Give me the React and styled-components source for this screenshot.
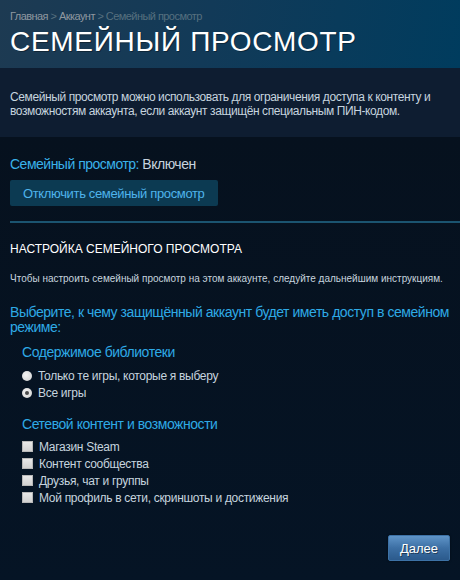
import React, { useState } from "react";
import styled, { createGlobalStyle } from "styled-components";

const GlobalStyle = createGlobalStyle`
  html, body {
    margin: 0;
    padding: 0;
    background: #051120;
  }
  body {
    font-family: "Liberation Sans", Arial, sans-serif;
  }
`;

const Page = styled.div`
  width: 460px;
  height: 580px;
  overflow: hidden;
  background: #051120;
  display: flex;
  flex-direction: column;
`;

const Header = styled.div`
  height: 68px;
  box-sizing: border-box;
  padding: 9px 10px 0;
  background: linear-gradient(100deg, #1d3a52 0%, #123a58 45%, #003c5e 100%);
`;

const Crumbs = styled.div`
  font-size: 11px;
  line-height: 14px;
  letter-spacing: -0.55px;
  color: #56707f;
  a {
    color: #8f98a0;
    text-decoration: none;
  }
`;

const Title = styled.h1`
  margin: 3px 0 0;
  font-size: 28px;
  line-height: 32px;
  font-weight: normal;
  color: #ffffff;
  letter-spacing: 0.7px;
  text-shadow: 1px 1px 0 rgba(0, 0, 0, 0.35);
`;

const Intro = styled.div`
  height: 69px;
  box-sizing: border-box;
  padding: 22px 10px 0;
  background: #0e1d31;
  font-size: 12px;
  line-height: 14px;
  letter-spacing: -0.4px;
  color: #c6d4df;
`;

const Content = styled.div`
  flex: 1;
  display: flex;
  flex-direction: column;
  padding: 18px 0 19px 10px;
  background: linear-gradient(to bottom, #06111e, #051425);
`;

const Status = styled.div`
  font-size: 14px;
  line-height: 18px;
  letter-spacing: -0.5px;
  color: #c6d4df;
  span {
    color: #3ab2ea;
  }
`;

const DisableButton = styled.button`
  align-self: flex-start;
  margin-top: 7px;
  height: 26px;
  padding: 0 13px;
  border: none;
  border-radius: 2px;
  background: #0c3a52;
  color: #4fb4ec;
  font-family: inherit;
  font-size: 13px;
  letter-spacing: -0.35px;
  cursor: pointer;
`;

const Divider = styled.div`
  height: 2px;
  margin-top: 15px;
  background: #1b5470;
`;

const SectionTitle = styled.h2`
  margin: 19px 0 0;
  font-size: 12px;
  line-height: 14px;
  font-weight: normal;
  color: #ffffff;
  text-transform: uppercase;
`;

const Note = styled.p`
  margin: 17px 0 0;
  font-size: 10px;
  line-height: 12px;
  color: #c6d4df;
`;

const Question = styled.p`
  margin: 20px 0 0;
  font-size: 14px;
  line-height: 15px;
  letter-spacing: -0.45px;
  color: #2eaae6;
`;

const Group = styled.div`
  margin: ${(p) => p.$top}px 0 0 12px;
  display: flex;
  flex-direction: column;
`;

const GroupTitle = styled.div`
  font-size: 14px;
  line-height: 17px;
  letter-spacing: -0.45px;
  color: #2eaae6;
  margin-bottom: ${(p) => p.$gap}px;
`;

const Option = styled.label`
  display: flex;
  align-items: center;
  gap: 6px;
  height: 17px;
  font-size: 12px;
  letter-spacing: -0.3px;
  color: #c6d4df;
  cursor: pointer;
`;

const Radio = styled.span`
  width: 10px;
  height: 10px;
  border-radius: 50%;
  background: radial-gradient(circle at 40% 40%, #f4f4f4 0%, #cfcfcf 100%);
  display: flex;
  align-items: center;
  justify-content: center;
  &::after {
    content: "";
    width: 4px;
    height: 4px;
    border-radius: 50%;
    background: ${(p) => (p.$on ? "#4a4a4a" : "transparent")};
  }
`;

const Check = styled.span`
  width: 11px;
  height: 11px;
  box-sizing: border-box;
  border: 1px solid #b8b8b8;
  background: linear-gradient(to bottom, #e8e8e8, #d2d2d2);
`;

const Footer = styled.div`
  margin-top: auto;
  display: flex;
  justify-content: flex-end;
  padding-right: 10px;
`;

const NextButton = styled.button`
  height: 26px;
  padding: 0 11px;
  border: 1px solid #3d72a6;
  border-radius: 2px;
  background: linear-gradient(to bottom, #5f94c8 0%, #3c6fa4 50%, #2b5a8c 100%);
  color: #ffffff;
  font-family: inherit;
  font-size: 13px;
  text-shadow: 1px 1px 0 rgba(0, 0, 0, 0.45);
  box-shadow: 0 0 2px rgba(0, 0, 0, 0.6);
  cursor: pointer;
`;

const libraryOptions = ["Только те игры, которые я выберу", "Все игры"];
const onlineOptions = [
  "Магазин Steam",
  "Контент сообщества",
  "Друзья, чат и группы",
  "Мой профиль в сети, скриншоты и достижения",
];

export default function App() {
  const [library, setLibrary] = useState(1);
  const [online, setOnline] = useState([false, false, false, false]);

  const toggle = (i) => {
    setOnline(online.map((v, j) => (j === i ? !v : v)));
  };

  return (
    <Page>
      <GlobalStyle />
      <Header>
        <Crumbs>
          <a href="#">Главная</a> &gt; <a href="#">Аккаунт</a> &gt; Семейный просмотр
        </Crumbs>
        <Title>СЕМЕЙНЫЙ ПРОСМОТР</Title>
      </Header>
      <Intro>
        Семейный просмотр можно использовать для ограничения доступа к контенту и
        возможностям аккаунта, если аккаунт защищён специальным ПИН-кодом.
      </Intro>
      <Content>
        <Status>
          <span>Семейный просмотр:</span> Включен
        </Status>
        <DisableButton>Отключить семейный просмотр</DisableButton>
        <Divider />
        <SectionTitle>Настройка семейного просмотра</SectionTitle>
        <Note>
          Чтобы настроить семейный просмотр на этом аккаунте, следуйте дальнейшим
          инструкциям.
        </Note>
        <Question>
          Выберите, к чему защищённый аккаунт будет иметь доступ в семейном режиме:
        </Question>
        <Group $top={9}>
          <GroupTitle $gap={6}>Содержимое библиотеки</GroupTitle>
          {libraryOptions.map((text, i) => (
            <Option key={text} onClick={() => setLibrary(i)}>
              <Radio $on={library === i} />
              {text}
            </Option>
          ))}
        </Group>
        <Group $top={15}>
          <GroupTitle $gap={5}>Сетевой контент и возможности</GroupTitle>
          {onlineOptions.map((text, i) => (
            <Option key={text} onClick={() => toggle(i)}>
              <Check />
              {text}
            </Option>
          ))}
        </Group>
        <Footer>
          <NextButton>Далее</NextButton>
        </Footer>
      </Content>
    </Page>
  );
}
